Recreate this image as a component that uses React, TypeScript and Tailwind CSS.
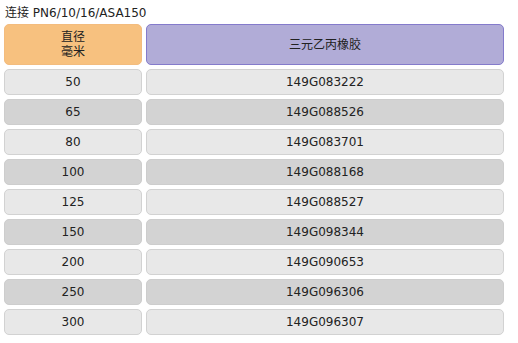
const rows = [
  ["50", "149G083222"],
  ["65", "149G088526"],
  ["80", "149G083701"],
  ["100", "149G088168"],
  ["125", "149G088527"],
  ["150", "149G098344"],
  ["200", "149G090653"],
  ["250", "149G096306"],
  ["300", "149G096307"],
];

export default function App() {
  return (
    <div
      className="h-[343px] w-[518px] bg-white pl-1 text-[12px] text-[#222]"
      style={{ fontFamily: '"DejaVu Sans", "Noto Sans CJK SC", sans-serif' }}
    >
      <div className="flex h-6 items-center pl-[1px] pt-[2px] leading-none">连接 PN6/10/16/ASA150</div>
      <div className="grid grid-cols-[138px_358px] gap-1">
        <div className="flex h-[41px] flex-col items-center justify-center rounded-[5px] border border-[#f3bc7e] bg-[#f7c17f] leading-[15px]">
          <span>直径</span>
          <span>毫米</span>
        </div>
        <div className="flex h-[41px] items-center justify-center rounded-[5px] border border-[#847bcb] bg-[#b1acd7]">
          三元乙丙橡胶
        </div>
        {rows.map(([d, code], i) => {
          const cell =
            i % 2 === 0
              ? "flex h-[26px] items-center justify-center rounded-[5px] border border-[#d2d2d2] bg-[#e8e8e8]"
              : "flex h-[26px] items-center justify-center rounded-[5px] border border-[#cdcdcd] bg-[#d3d3d3]";
          return [
            <div key={d + "a"} className={cell}>
              {d}
            </div>,
            <div key={d + "b"} className={cell}>
              {code}
            </div>,
          ];
        })}
      </div>
    </div>
  );
}
